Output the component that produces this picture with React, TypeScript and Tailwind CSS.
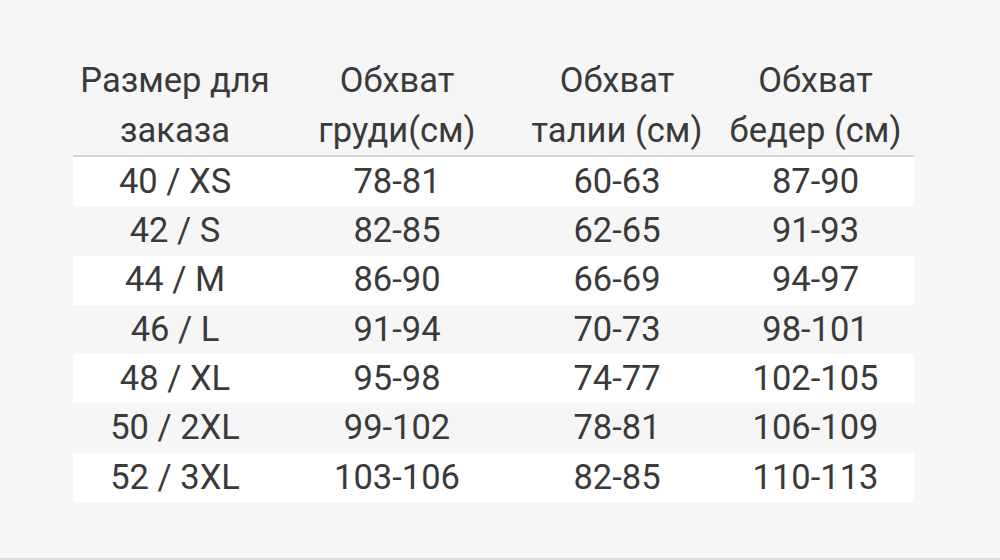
import React from "react";

const rows = [
  ["40 / XS", "78-81", "60-63", "87-90"],
  ["42 / S", "82-85", "62-65", "91-93"],
  ["44 / M", "86-90", "66-69", "94-97"],
  ["46 / L", "91-94", "70-73", "98-101"],
  ["48 / XL", "95-98", "74-77", "102-105"],
  ["50 / 2XL", "99-102", "78-81", "106-109"],
  ["52 / 3XL", "103-106", "82-85", "110-113"],
];

const headers = [
  ["Размер для", "заказа"],
  ["Обхват", "груди(см)"],
  ["Обхват", "талии (см)"],
  ["Обхват", "бедер (см)"],
];

const widths = ["w-[204px]", "w-[240px]", "w-[200px]", "w-[197px]"];

export default function App() {
  return (
    <div
      className="w-[1000px] h-[560px] bg-[#f6f6f6] text-[#3a3a3a] border-b-2 border-[#dcdcdc] overflow-hidden"
      style={{ fontFamily: "Roboto, 'Noto Sans', sans-serif" }}
    >
      <div className="ml-[73px] w-[841px] pt-[55px] text-[34.5px]">
        {/* Header */}
        <div className="flex border-b-2 border-[#d4d4d4] leading-[50px]">
          {headers.map((h, i) => (
            <div key={i} className={`${widths[i]} text-center whitespace-nowrap`}>
              <div>{h[0]}</div>
              <div>{h[1]}</div>
            </div>
          ))}
        </div>

        {/* Body */}
        {rows.map((r, ri) => (
          <div
            key={ri}
            className={`flex h-[49.3px] items-center ${ri % 2 === 0 ? "bg-white" : "bg-[#f6f6f6]"}`}
          >
            {r.map((c, ci) => (
              <div key={ci} className={`${widths[ci]} text-center`}>
                {c}
              </div>
            ))}
          </div>
        ))}
      </div>
    </div>
  );
}
